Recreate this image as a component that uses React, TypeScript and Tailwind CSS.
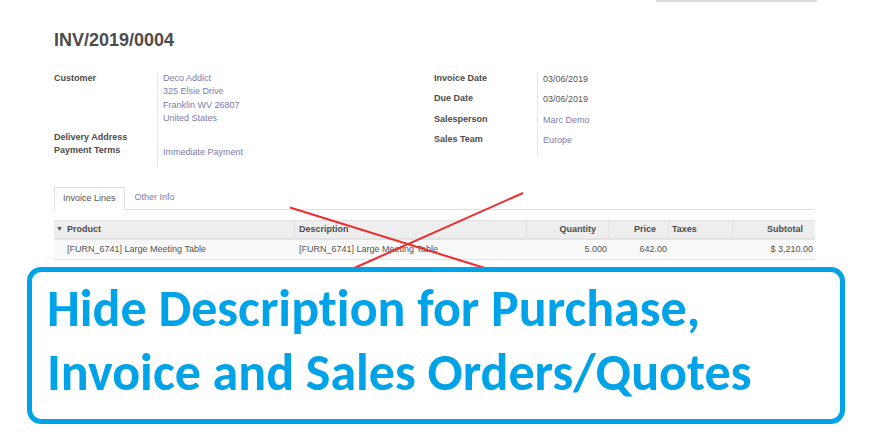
const ui = { fontFamily: '"Liberation Sans", Arial, sans-serif' };
const banner = { fontFamily: 'Carlito, Lato, "Open Sans", sans-serif' };

function Label({ children }: { children: React.ReactNode }) {
  return <div className="font-bold text-[#4c4c4c] leading-[13px]">{children}</div>;
}

export default function App() {
  return (
    <div className="relative w-[880px] h-[440px] overflow-hidden bg-white text-[9px]" style={ui}>
      {/* search field edge at the top */}
      <div className="flex justify-end pr-[63px]">
        <div className="w-[161px] h-[2px] bg-[#dcdce6]" />
      </div>

      <div className="pl-[54px] w-[815px]">
        <h1 className="mt-[28px] text-[18px] leading-[20px] font-bold text-[#4c4c4c]">INV/2019/0004</h1>

        <div className="flex items-start mt-[22px]">
          {/* left group */}
          <div className="w-[380px] grid grid-cols-[103px_1fr]">
            <Label>Customer</Label>
            <div className="border-l border-[#e6e6e6] pl-[5px] text-[#7c7bad] leading-[13.3px]">
              <div>Deco Addict</div>
              <div>325 Elsie Drive</div>
              <div>Franklin WV 26807</div>
              <div>United States</div>
            </div>
            <div className="pt-[6px]">
              <Label>Delivery Address</Label>
            </div>
            <div className="border-l border-[#e6e6e6]" />
            <Label>Payment Terms</Label>
            <div className="border-l border-[#e6e6e6] pl-[5px] pt-[2px] pb-[8px] text-[#7c7bad] leading-[13px]">
              Immediate Payment
            </div>
          </div>

          {/* right group */}
          <div className="grid grid-cols-[103px_1fr] w-[250px]">
            <div className="h-[20px]"><Label>Invoice Date</Label></div>
            <div className="border-l border-[#e6e6e6] pl-[5px] pt-[1px] leading-[13px] text-[#555]">03/06/2019</div>
            <div className="h-[21px]"><Label>Due Date</Label></div>
            <div className="border-l border-[#e6e6e6] pl-[5px] pt-[1px] leading-[13px] text-[#555]">03/06/2019</div>
            <div className="h-[20px]"><Label>Salesperson</Label></div>
            <div className="border-l border-[#e6e6e6] pl-[5px] pt-[1px] leading-[13px] text-[#7c7bad]">Marc Demo</div>
            <div className="h-[23px]"><Label>Sales Team</Label></div>
            <div className="border-l border-[#e6e6e6] pl-[5px] pt-[1px] leading-[13px] text-[#7c7bad]">Europe</div>
          </div>
        </div>

        {/* tabs */}
        <div className="mt-[20px] flex border-b border-[#dee2e6]">
          <div className="h-[23px] -mb-px px-[8px] flex items-center border border-b-0 border-[#dee2e6] bg-white text-[#555]">
            Invoice Lines
          </div>
          <div className="h-[22px] px-[10px] flex items-center text-[#7c7bad]">Other Info</div>
        </div>

        {/* lines table */}
        <div className="mt-[10px] w-[761px]">
          <div className="flex h-[20px] bg-[#eeeeee] border-t border-b-2 border-[#e2e2e2] font-bold text-[#4c4c4c]">
            <div className="w-[241px] flex items-center border-r border-[#e2e2e2]">
              <span className="w-[13px] pl-[2px] text-[7px]">▼</span>
              Product
            </div>
            <div className="w-[232px] flex items-center pl-[4px] border-r border-[#e2e2e2]">Description</div>
            <div className="w-[82px] flex items-center justify-end pr-[12px] border-r border-[#e2e2e2]">Quantity</div>
            <div className="w-[60px] flex items-center justify-end pr-[12px] border-r border-[#e2e2e2]">Price</div>
            <div className="w-[64px] flex items-center pl-[3px] border-r border-[#e2e2e2]">Taxes</div>
            <div className="flex-1 flex items-center justify-end pr-[12px]">Subtotal</div>
          </div>
          <div className="flex h-[20px] bg-[#f9f9f9] border-b border-[#e2e2e2] text-[#555]">
            <div className="w-[241px] flex items-center pl-[13px]">[FURN_6741] Large Meeting Table</div>
            <div className="w-[232px] flex items-center pl-[4px]">[FURN_6741] Large Meeting Table</div>
            <div className="w-[82px] flex items-center justify-end pr-[2px]">5.000</div>
            <div className="w-[60px] flex items-center justify-end pr-[2px]">642.00</div>
            <div className="w-[64px]" />
            <div className="flex-1 flex items-center justify-end pr-[2px]">$ 3,210.00</div>
          </div>
        </div>
      </div>

      {/* red cross over the Description column */}
      <svg className="absolute left-0 top-0 pointer-events-none" width="880" height="440">
        <line x1="290" y1="207.5" x2="488" y2="269" stroke="#ee2b2b" strokeWidth="2" />
        <line x1="523" y1="193" x2="352" y2="269" stroke="#ee2b2b" strokeWidth="2" />
      </svg>

      {/* banner */}
      <div className="relative mt-[7px] ml-[27px] w-[818px] h-[157px] rounded-[14px] border-[5px] border-[#00a2e8] bg-white pl-[15px] pt-[4px] text-[#00a2e8] font-bold text-[52px] leading-[64px] [font-variant-ligatures:none]" style={banner}>
        <div>Hide Description for Purchase,</div>
        <div>Invoice and Sales Orders/Quotes</div>
      </div>
    </div>
  );
}
